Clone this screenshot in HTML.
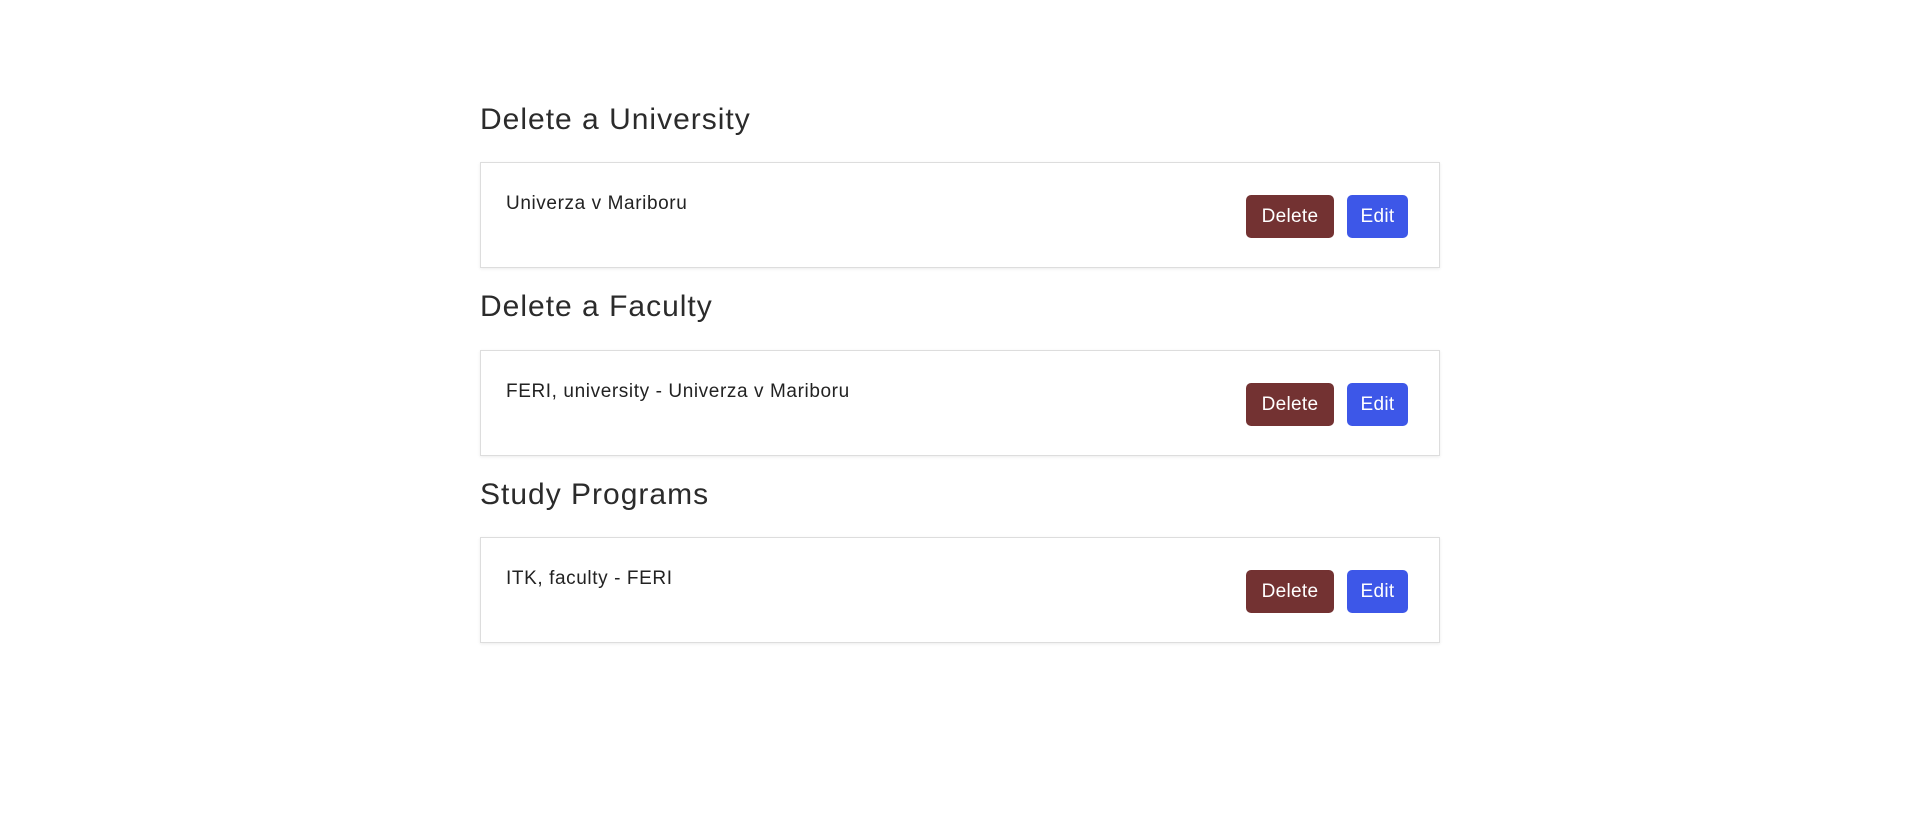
<!DOCTYPE html>
<html><head><style>
body{margin:0;background:#fff;width:1920px;height:832px;font-family:"Liberation Sans",sans-serif;color:#2b2b2b;position:relative}
h2{position:absolute;left:480px;margin:0;font-weight:400;font-size:30px;line-height:34px;letter-spacing:1px}
.card{position:absolute;left:480px;width:958px;height:104px;border:1px solid #ddd;box-shadow:0 1px 3px rgba(0,0,0,.08)}
.t{position:absolute;left:25px;top:30px;font-size:19px;color:#222;letter-spacing:0.6px}
.b{position:absolute;top:32px;height:43px;border-radius:5px;color:#fff;font-size:19px;line-height:44px;text-align:center;letter-spacing:0.3px}
.d{left:765px;width:88px;background:#733232}
.e{left:866px;width:61px;background:#3d57e8}
</style></head><body>
<h2 style="top:103px">Delete a University</h2>
<div class="card" style="top:162px"><div class="t">Univerza v Mariboru</div><div class="b d">Delete</div><div class="b e">Edit</div></div>
<h2 style="top:290px">Delete a Faculty</h2>
<div class="card" style="top:350px"><div class="t">FERI, university - Univerza v Mariboru</div><div class="b d">Delete</div><div class="b e">Edit</div></div>
<h2 style="top:478px">Study Programs</h2>
<div class="card" style="top:537px"><div class="t">ITK, faculty - FERI</div><div class="b d">Delete</div><div class="b e">Edit</div></div>
</body></html>
